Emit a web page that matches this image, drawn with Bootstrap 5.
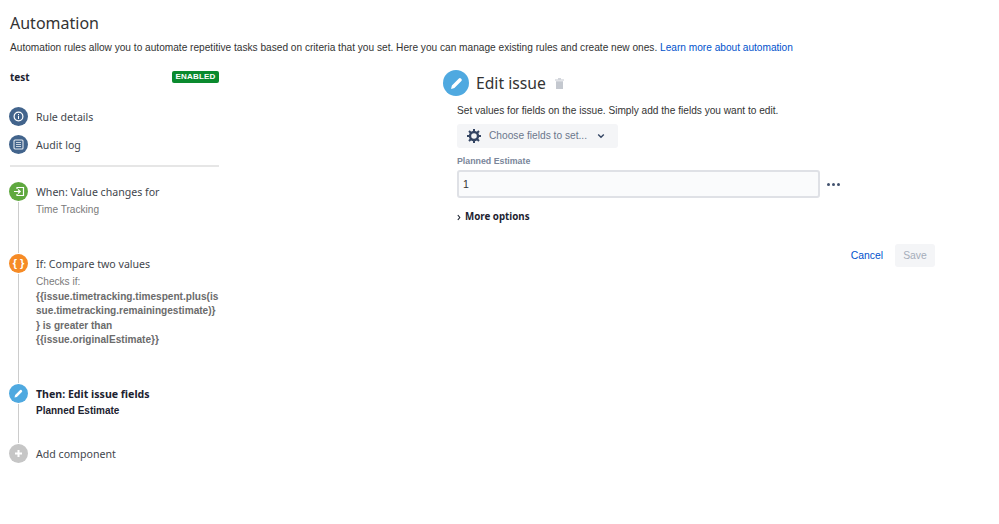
<!DOCTYPE html>
<html lang="en"><head><meta charset="utf-8"><title>Automation</title>
<link rel="stylesheet" href="https://cdn.jsdelivr.net/npm/bootstrap@5.3.0/dist/css/bootstrap.min.css">
<style>
html,body{height:100%}
body{font-family:"Liberation Sans",Arial,sans-serif;font-size:10.14px;line-height:16px;color:#333;background:#fff;overflow:hidden}
.shell{padding:12px 0 0 10px}
.page-title{font-family:"Noto Sans",sans-serif;font-size:16px;line-height:22px;font-weight:400;color:#333;margin:0 0 6px}
.intro{margin:0 0 13px;height:16px}
.intro a,.cancel-link{color:#0052cc;text-decoration:none}
.left-col{width:209px;flex:none}
.right-col{width:492px;flex:none;margin-left:224px;margin-top:1px}
.rule-head{height:16px}
.rule-name{font-family:"Noto Sans",sans-serif;font-weight:700;font-size:10px;color:#1c2230}
.state{background:#0a8a2e;color:#fff;font-weight:700;font-size:8px;line-height:12px;height:12px;width:47px;border-radius:2px;letter-spacing:.2px;text-align:center}
.dot{width:19px;height:19px;border-radius:50%;flex:none;display:flex;align-items:center;justify-content:center;position:relative;z-index:1;margin-left:-1px;box-shadow:0 0 0 1px #fff}
.dot-navy{background:#42648c}.dot-green{background:#5fa83f}.dot-orange{background:#f68b26}.dot-blue{background:#4fa9e0}.dot-grey{background:#c6c6c6}
.nav-rows{padding-top:22px;padding-bottom:2px}
.row-item{display:flex;align-items:center;gap:8px;height:19px;margin-bottom:9px}
.step-title{font-family:"Noto Sans",sans-serif;font-size:10.6px;line-height:18px;color:#42464d}
.divider{height:2px;background:#e6e6e6;margin:0 0 15px}
.timeline{position:relative}
.timeline::before{content:"";position:absolute;left:8px;top:10px;height:271px;width:1px;background:#ccc}
.step{display:flex;gap:8px}
.step-body{padding-top:1px;width:183px}
.sub{font-size:10.1px;line-height:14.5px;color:#7a7a7a;margin-top:2px}
.sub b{color:#6b6b6b;font-weight:700}
.step-when{height:72px}.step-if{height:130px}.step-then{height:60px}
.active .step-title{font-weight:700;color:#1c2230}
.active .sub{color:#1c2230;font-weight:700;font-size:10px;margin-top:1px}
.hero{width:26px;height:26px;border-radius:50%;background:#4fa9e0;flex:none;display:flex;align-items:center;justify-content:center}
.hero-title{font-family:"Noto Sans",sans-serif;font-size:15.7px;line-height:26px;font-weight:400;color:#333;margin:0 0 0 -1px}
.trash-icon{margin-left:1px}
.form-area{padding-left:14px}
.hint{margin:7px 0 5px;height:16px}
.field-picker{width:161px;height:24px;background:#f4f5f7;border-radius:3px;color:#6b778c;display:flex;align-items:center;padding-left:10px;gap:8px;font-size:10.2px}
.picker-chev{margin-left:2px}
.field-label{font-size:8.8px;line-height:12px;font-weight:700;color:#7a869a;margin:7px 0 3px;display:block}
.field-row{display:flex;align-items:center;gap:7px}
.field-input{width:363px;height:28px;background:#fafbfc;border:2px solid #dfe1e6;border-radius:3px;font-size:10.5px;color:#333;padding:0 4px;font-family:inherit}
.more-dots{color:#42526e;display:flex;gap:2px}
.more-dots i{width:3px;height:3px;border-radius:50%;background:#42526e;display:block}
.more-toggle{margin-top:11px;font-family:"Noto Sans",sans-serif;font-weight:700;font-size:9.75px;line-height:16px;color:#1c2230;display:flex;align-items:center;gap:4px}
.actions{display:flex;justify-content:flex-end;align-items:center;gap:12px;margin-top:19px}
.cancel-link{font-size:10.4px}
.save-btn{width:40px;height:23px;background:#f4f5f7;color:#a5adba;border:0;border-radius:3px;font-size:10.4px;padding:0}
</style></head><body>
<div class="shell">
<h1 class="page-title">Automation</h1>
<p class="intro">Automation rules allow you to automate repetitive tasks based on criteria that you set. Here you can manage existing rules and create new ones. <a href="#">Learn more about automation</a></p>
<div class="d-flex">
 <aside class="left-col">
  <div class="rule-head d-flex justify-content-between align-items-center"><span class="rule-name">test</span><span class="state">ENABLED</span></div>
  <div class="nav-rows">
   <div class="row-item"><span class="dot dot-navy"><svg width="11" height="11" viewBox="0 0 11 11"><circle cx="5.5" cy="5.5" r="4.4" fill="none" stroke="#fff" stroke-width="1.2"/><rect x="5" y="4.8" width="1" height="3.2" fill="#fff"/><rect x="5" y="3" width="1" height="1" fill="#fff"/></svg></span><span class="step-title">Rule details</span></div>
   <div class="row-item"><span class="dot dot-navy"><svg width="11" height="11" viewBox="0 0 11 11"><rect x="1" y="1" width="9" height="9" rx="1" fill="none" stroke="#fff" stroke-width="1.1" opacity=".85"/><path d="M3 3.5h5M3 5.5h5M3 7.5h5" stroke="#fff" stroke-width=".9" opacity=".8"/></svg></span><span class="step-title">Audit log</span></div>
  </div>
  <div class="divider"></div>
  <div class="timeline">
   <div class="step step-when"><span class="dot dot-green"><svg width="12" height="11" viewBox="0 0 12 11"><path d="M4 3V1.5h6.5v8H4V8" fill="none" stroke="#fff" stroke-width="1.2"/><path d="M1 5.5h6M5 3.5l2.2 2L5 7.5" fill="none" stroke="#fff" stroke-width="1.2"/></svg></span><div class="step-body"><div class="step-title">When: Value changes for</div><div class="sub">Time Tracking</div></div></div>
   <div class="step step-if"><span class="dot dot-orange"><span class="text-white fw-bold" style="font-size:11px;line-height:1">{ }</span></span><div class="step-body"><div class="step-title">If: Compare two values</div><div class="sub">Checks if:<br><b>{{issue.timetracking.timespent.plus(is<br>sue.timetracking.remainingestimate)}<br>} is greater than<br>{{issue.originalEstimate}}</b></div></div></div>
   <div class="step step-then active"><span class="dot dot-blue"><svg width="11" height="11" viewBox="0 0 11 11"><path d="M1.5 9.5l.6-2.4 5-5a1 1 0 0 1 1.4 0l.4.4a1 1 0 0 1 0 1.4l-5 5z" fill="#fff"/></svg></span><div class="step-body"><div class="step-title">Then: Edit issue fields</div><div class="sub">Planned Estimate</div></div></div>
   <div class="step"><span class="dot dot-grey"><svg width="9" height="9" viewBox="0 0 9 9"><path d="M4.5 1v7M1 4.5h7" stroke="#fff" stroke-width="2"/></svg></span><div class="step-body"><div class="step-title">Add component</div></div></div>
  </div>
 </aside>
 <main class="right-col">
  <div class="d-flex align-items-center gap-2">
   <span class="hero"><svg width="15" height="15" viewBox="0 0 15 15"><path d="M2 13l.9-3.4 7-7a1.4 1.4 0 0 1 2 0l.5.5a1.4 1.4 0 0 1 0 2l-7 7z" fill="#fff"/></svg></span>
   <h2 class="hero-title">Edit issue</h2>
   <svg class="trash-icon" width="9" height="11" viewBox="0 0 9 11"><path d="M0 1.5h9v1H0zM3 .2h3v1H3zM1 3.2h7V11H1z" fill="#c4c8cf"/></svg>
  </div>
  <div class="form-area">
   <p class="hint">Set values for fields on the issue. Simply add the fields you want to edit.</p>
   <div class="field-picker"><svg width="14" height="14" viewBox="0 0 14 14"><circle cx="7" cy="7" r="4" fill="none" stroke="#344563" stroke-width="2.4"/><path d="M7 0v3M7 11v3M0 7h3M11 7h3M2 2l2 2M10 10l2 2M12 2l-2 2M4 10l-2 2" stroke="#344563" stroke-width="2"/></svg><span>Choose fields to set...</span><svg class="picker-chev" width="8" height="6" viewBox="0 0 8 6"><path d="M1.2 1.5L4 4.2l2.8-2.7" fill="none" stroke="#344563" stroke-width="1.4"/></svg></div>
   <label class="field-label" for="pe">Planned Estimate</label>
   <div class="field-row"><input id="pe" class="field-input" value="1"><span class="more-dots"><i></i><i></i><i></i></span></div>
   <div class="more-toggle"><svg width="4" height="7" viewBox="0 0 4 7"><path d="M.8 1l2 2.5-2 2.5" fill="none" stroke="#1c2230" stroke-width="1.1"/></svg>More options</div>
  </div>
  <div class="actions"><a class="cancel-link" href="#">Cancel</a><button class="save-btn" disabled>Save</button></div>
 </main>
</div>
</div>
<script src="https://cdn.jsdelivr.net/npm/bootstrap@5.3.0/dist/js/bootstrap.bundle.min.js"></script>
</body></html>
